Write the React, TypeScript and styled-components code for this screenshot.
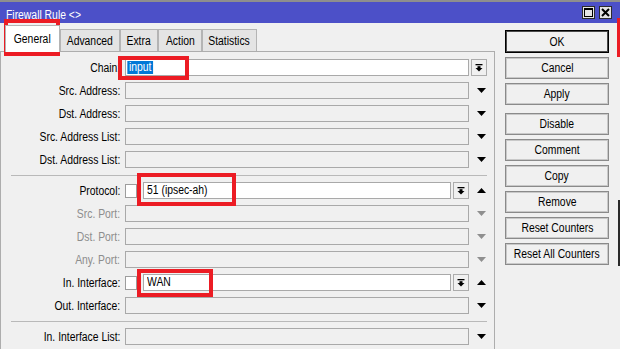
import React from 'react';
import styled, { createGlobalStyle, css } from 'styled-components';

const FONT = `"Liberation Sans", Arial, sans-serif`;

const GlobalStyle = createGlobalStyle`
  html, body {
    margin: 0;
    padding: 0;
    background-color: #f0f0f0;
  }
  body {
    font-family: ${FONT};
    font-size: 12.5px;
    color: #000;
  }
`;

// the reference text is narrow (Arial Narrow-like), squeeze Liberation Sans to match
const Squeeze = styled.span<{ $origin?: string }>`
  display: inline-block;
  white-space: nowrap;
  transform: scaleX(0.83);
  transform-origin: ${(p) => p.$origin ?? 'center'};
`;

const Window = styled.div`
  position: relative;
  width: 620px;
  height: 349px;
  overflow: hidden;
  background-color: #f0f0f0;
`;

const TitleBar = styled.div`
  height: 23px;
  box-sizing: border-box;
  border-top: 2px solid #8e8e8e;
  background-color: #4c50c8;
  display: flex;
  align-items: center;
  padding: 0 8px 0 6px;
`;

const TitleText = styled.div`
  flex: 1;
  color: #fff;
  padding-top: 4px;
  white-space: nowrap;
`;

const TitleButton = styled.div`
  width: 13px;
  height: 13px;
  box-sizing: border-box;
  border: 1px solid #2c2c2c;
  background-color: #e4e4e4;
  display: flex;
  align-items: center;
  justify-content: center;
  & + & {
    margin-left: 4px;
  }
`;

const Body = styled.div`
  display: flex;
  height: 326px;
`;

const LeftCol = styled.div`
  width: 495px;
  display: flex;
  flex-direction: column;
`;

const TabStrip = styled.div`
  height: 28px;
  box-sizing: border-box;
  display: flex;
  align-items: flex-end;
  padding-left: 5px;
`;

const Tab = styled.div<{ $active?: boolean; $w: number }>`
  position: relative;
  box-sizing: border-box;
  width: ${(p) => p.$w}px;
  height: 22px;
  display: flex;
  align-items: center;
  justify-content: center;
  border: 1px solid #b4b4b4;
  border-bottom: none;
  background-color: #e4e4e4;
  ${(p) =>
    p.$active &&
    css`
      z-index: 1;
      height: 27px;
      margin-bottom: -1px;
      background-color: #fff;
    `}
`;

const Panel = styled.div`
  flex: 1;
  border-top: 1px solid #adadad;
  border-left: 1px solid #adadad;
  border-right: 1px solid #adadad;
  padding-top: 7px;
`;

const Section = styled.div`
  display: flex;
  flex-direction: column;
  gap: 6px;
`;

const Separator = styled.div`
  height: 1px;
  background-color: #b9b9b9;
  margin: 7px 7px 6px 10px;
`;

const Row = styled.div`
  display: flex;
  align-items: center;
  height: 17px;
`;

const Label = styled.div<{ $dim?: boolean }>`
  width: 119px;
  padding-right: 5px;
  flex-shrink: 0;
  text-align: right;
  white-space: nowrap;
  color: ${(p) => (p.$dim ? '#8d8d8d' : '#000')};
`;

const Field = styled.div`
  width: 344px;
  flex-shrink: 0;
  display: flex;
  align-items: center;
`;

const Check = styled.div`
  width: 12px;
  height: 14px;
  box-sizing: border-box;
  border: 1px solid #9d9d9d;
  background-color: #fff;
  margin-right: 6px;
  flex-shrink: 0;
`;

const Input = styled.div<{ $blank?: boolean }>`
  flex: 1;
  height: 17px;
  box-sizing: border-box;
  border: 1px solid #a9a9a9;
  background-color: ${(p) => (p.$blank ? '#f0f0f0' : '#fff')};
  padding-left: 3px;
  line-height: 15px;
  white-space: nowrap;
  overflow: hidden;
`;

const Selected = styled.span`
  display: inline-block;
  margin-left: -2px;
  padding: 0 2px;
  line-height: 13px;
  background-color: #0078d7;
  color: #fff;
`;

const DropBtn = styled.div`
  width: 16px;
  height: 17px;
  box-sizing: border-box;
  border: 1px solid #acacac;
  background-color: #f0f0f0;
  margin-left: 2px;
  flex-shrink: 0;
  display: flex;
  align-items: center;
  justify-content: center;
`;

const Trailing = styled.div<{ $pad: number }>`
  width: 24px;
  display: flex;
  align-items: center;
  padding-left: ${(p) => p.$pad}px;
  box-sizing: border-box;
`;

const RightCol = styled.div`
  display: flex;
  flex-direction: column;
  padding: 7px 0 0 10px;
`;

const Button = styled.div<{ $default?: boolean; $gap?: number }>`
  width: 104px;
  height: 22px;
  box-sizing: border-box;
  margin-top: ${(p) => p.$gap ?? 4}px;
  border: 1px solid #8a8a8a;
  box-shadow: inset 0 0 0 1px #c9c9c9;
  background-color: #f0f0f0;
  display: flex;
  align-items: center;
  justify-content: center;
  white-space: nowrap;
  ${(p) =>
    p.$default &&
    css`
      height: 23px;
      border-color: #000;
      box-shadow: inset 0 0 0 1px #4a4a4a;
    `}
`;

const RedMark = styled.div<{ $x: number; $y: number; $w: number; $h: number }>`
  position: absolute;
  left: ${(p) => p.$x}px;
  top: ${(p) => p.$y}px;
  width: ${(p) => p.$w}px;
  height: ${(p) => p.$h}px;
  box-sizing: border-box;
  border: 4px solid #ec1c24;
  pointer-events: none;
`;

const EdgeBar = styled.div<{ $y: number; $h: number; $color: string; $w: number }>`
  position: absolute;
  right: 0;
  top: ${(p) => p.$y}px;
  width: ${(p) => p.$w}px;
  height: ${(p) => p.$h}px;
  background-color: ${(p) => p.$color};
`;

const DropIcon = () => (
  <svg width="8" height="8" viewBox="0 0 8 8">
    <rect x="0.5" y="0" width="7" height="1.3" fill="#000" />
    <rect x="2.5" y="2.2" width="3" height="2" fill="#000" />
    <polygon points="0.5,4 7.5,4 4,7.6" fill="#000" />
  </svg>
);

const Arrow = ({ up, dim }: { up?: boolean; dim?: boolean }) => (
  <svg width="9" height="5" viewBox="0 0 9 5">
    <polygon points={up ? '0,5 9,5 4.5,0' : '0,0 9,0 4.5,5'} fill={dim ? '#8f8f8f' : '#000'} />
  </svg>
);

type RowProps = {
  label: string;
  dim?: boolean;
  check?: boolean;
  value?: React.ReactNode;
  drop?: boolean;
  trailing?: 'down' | 'up' | 'button';
};

const FieldRow = ({ label, dim, check, value, drop, trailing = 'down' }: RowProps) => (
  <Row>
    <Label $dim={dim}>
      <Squeeze $origin="right">{label}</Squeeze>
    </Label>
    <Field>
      {check && <Check />}
      <Input $blank={value === undefined}>
        {value !== undefined && <Squeeze $origin="left">{value}</Squeeze>}
      </Input>
      {drop && (
        <DropBtn>
          <DropIcon />
        </DropBtn>
      )}
    </Field>
    <Trailing $pad={trailing === 'button' ? 0 : 8}>
      {trailing === 'button' ? (
        <DropBtn>
          <DropIcon />
        </DropBtn>
      ) : (
        <Arrow up={trailing === 'up'} dim={dim} />
      )}
    </Trailing>
  </Row>
);

const tabs = [
  { name: 'General', w: 55 },
  { name: 'Advanced', w: 60 },
  { name: 'Extra', w: 38 },
  { name: 'Action', w: 44 },
  { name: 'Statistics', w: 55 },
];

const buttons = ['Cancel', 'Apply', 'Disable', 'Comment', 'Copy', 'Remove', 'Reset Counters', 'Reset All Counters'];

const App = () => {
  return (
    <Window>
      <GlobalStyle />
      <TitleBar>
        <TitleText>
          <Squeeze $origin="left">Firewall Rule &lt;&gt;</Squeeze>
        </TitleText>
        <TitleButton>
          <svg width="9" height="9" viewBox="0 0 9 9">
            <rect x="0.5" y="0.5" width="8" height="8" fill="none" stroke="#000" strokeWidth="1" />
            <rect x="0.5" y="0.5" width="8" height="1.5" fill="#000" />
          </svg>
        </TitleButton>
        <TitleButton>
          <svg width="9" height="9" viewBox="0 0 9 9">
            <path d="M1 1 L8 8 M8 1 L1 8" stroke="#000" strokeWidth="2" />
          </svg>
        </TitleButton>
      </TitleBar>
      <Body>
        <LeftCol>
          <TabStrip>
            {tabs.map((t, i) => (
              <Tab key={t.name} $w={t.w} $active={i === 0}>
                <Squeeze>{t.name}</Squeeze>
              </Tab>
            ))}
          </TabStrip>
          <Panel>
            <Section>
              <FieldRow
                label="Chain:"
                value={<Selected>input</Selected>}
                trailing="button"
              />
              <FieldRow label="Src. Address:" />
              <FieldRow label="Dst. Address:" />
              <FieldRow label="Src. Address List:" />
              <FieldRow label="Dst. Address List:" />
            </Section>
            <Separator />
            <Section>
              <FieldRow label="Protocol:" check value="51 (ipsec-ah)" drop trailing="up" />
              <FieldRow label="Src. Port:" dim />
              <FieldRow label="Dst. Port:" dim />
              <FieldRow label="Any. Port:" dim />
              <FieldRow label="In. Interface:" check value="WAN" drop trailing="up" />
              <FieldRow label="Out. Interface:" />
            </Section>
            <Separator />
            <Section>
              <FieldRow label="In. Interface List:" />
            </Section>
          </Panel>
        </LeftCol>
        <RightCol>
          <Button $default $gap={0}>
            <Squeeze>OK</Squeeze>
          </Button>
          {buttons.map((b) => (
            <Button key={b} $gap={b === 'Disable' ? 8 : 4}>
              <Squeeze>{b}</Squeeze>
            </Button>
          ))}
        </RightCol>
      </Body>
      <RedMark $x={4} $y={19} $w={56} $h={37} />
      <RedMark $x={118} $y={56} $w={71} $h={24} />
      <RedMark $x={137} $y={173} $w={99} $h={33} />
      <RedMark $x={137} $y={269} $w={76} $h={28} />
      <EdgeBar $y={18} $h={39} $w={3} $color="#ec1c24" />
      <EdgeBar $y={200} $h={66} $w={2} $color="#2a2a2a" />
    </Window>
  );
};

export default App;
